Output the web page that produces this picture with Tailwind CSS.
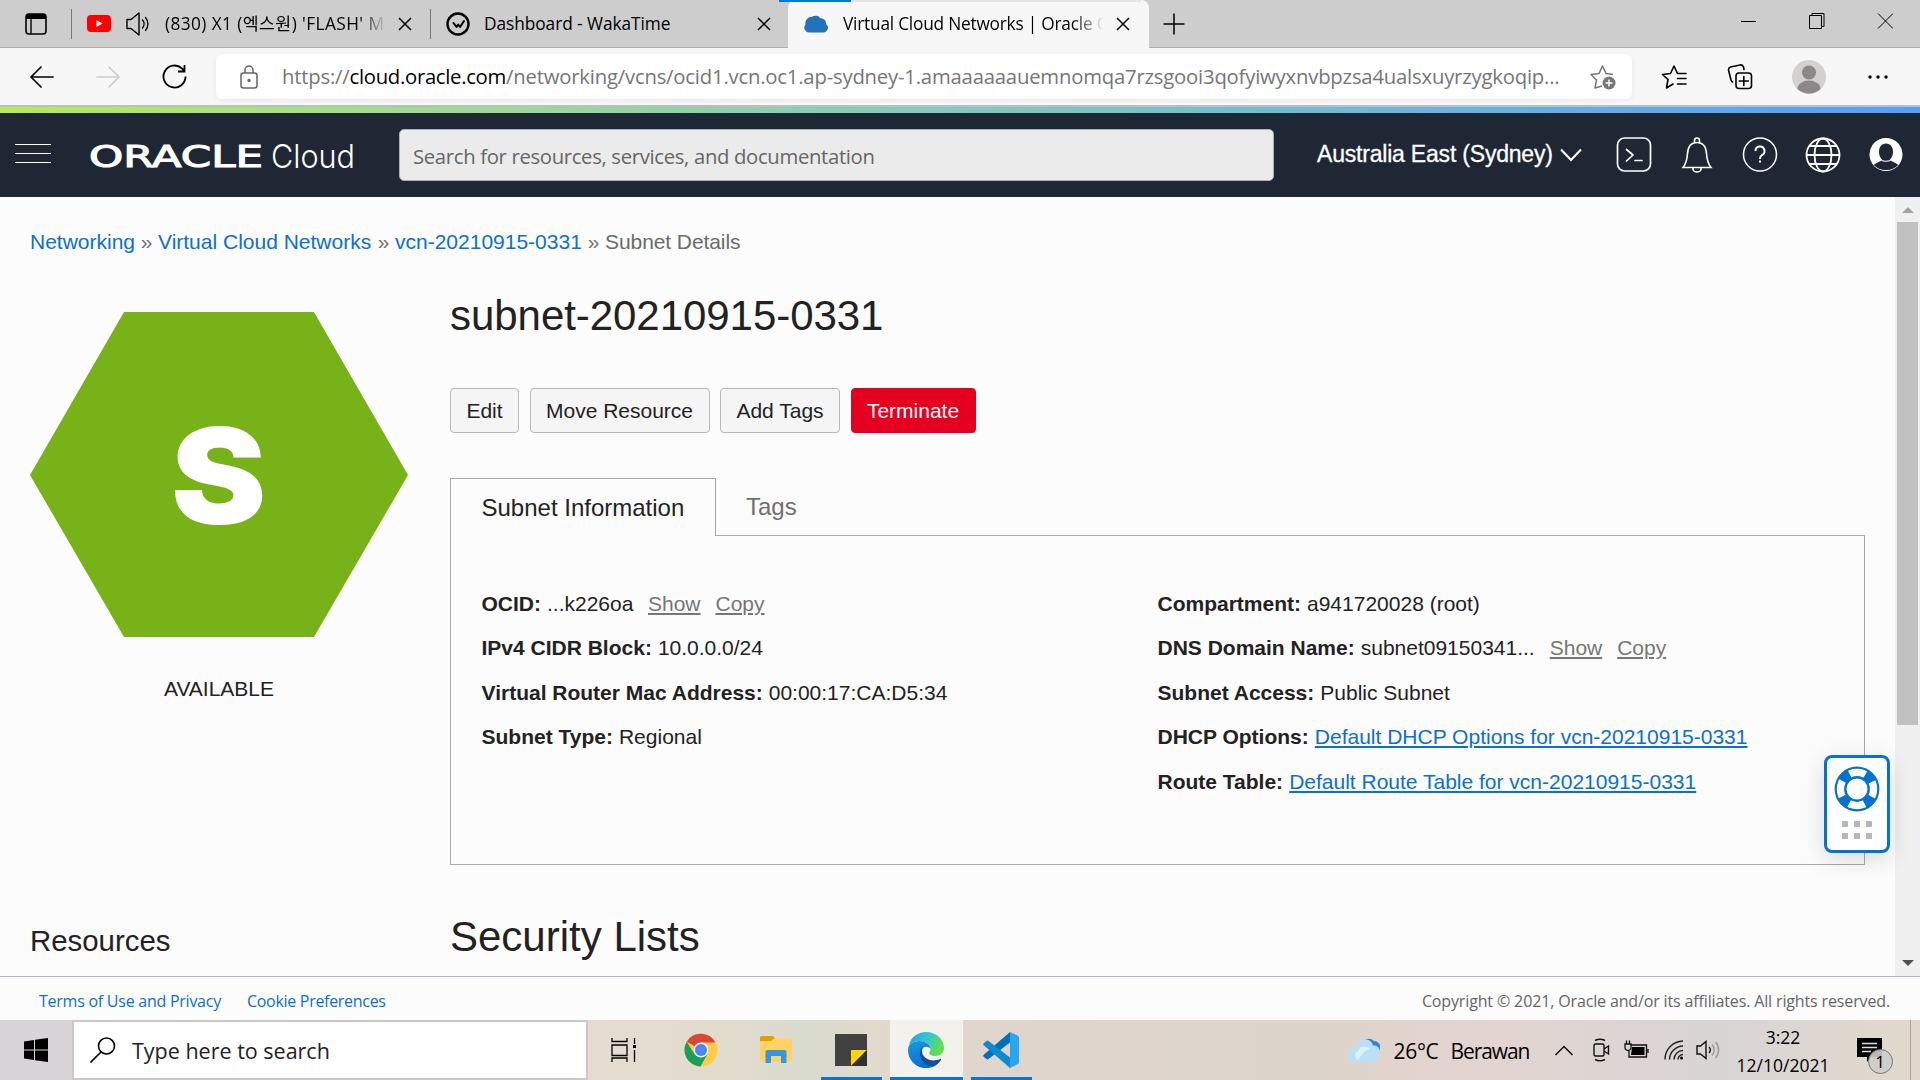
<!DOCTYPE html>
<html lang="en">
<head>
<meta charset="utf-8">
<title>Virtual Cloud Networks | Oracle Cloud</title>
<script src="https://cdn.jsdelivr.net/npm/@tailwindcss/browser@4"></script>
</head>
<body class="w-[1920px] h-[1080px] overflow-hidden flex flex-col bg-[#fcfcfc] text-[#222] whitespace-nowrap font-['Liberation_Sans',sans-serif]">

<!-- Tab strip -->
<div class="h-12 shrink-0 flex bg-[#cdcdcd] font-['Open_Sans','Noto_Sans_CJK_KR',sans-serif] text-[17.3px] text-black">
  <div class="w-[71px] border-b border-[#b0b0b0] flex items-center pl-[25px]">
    <svg width="22" height="22" viewBox="0 0 22 22"><rect x="1" y="1" width="20" height="20" rx="3" fill="none" stroke="#000" stroke-width="1.6"/><path d="M1 6V4a3 3 0 0 1 3-3h14a3 3 0 0 1 3 3v2z" fill="#000"/><path d="M6 6v15" stroke="#000" stroke-width="1.4"/></svg>
  </div>
  <div class="w-[359px] border-b border-[#b0b0b0] flex items-center">
    <i class="w-px h-[30px] bg-[#777]"></i>
    <svg class="ml-[15px]" width="24" height="17" viewBox="0 0 24 17"><rect width="24" height="17" rx="4" fill="#f00"/><path d="M9.500 5v7l6-3.500z" fill="#fff"/></svg>
    <svg class="ml-[14px]" width="26" height="26" viewBox="0 0 26 26" fill="none" stroke="#000" stroke-width="1.400" stroke-linecap="round" stroke-linejoin="round"><path d="M2 8.500h4L14 2v22l-8-6.500H2z"/><path d="M17.500 9a6 6 0 0 1 0 8M20.500 6.500a10 10 0 0 1 0 13"/></svg>
    <div class="ml-[14px] w-[221px] mask-r-from-88% mask-r-to-100% tracking-[0.4px]">(830) X1 (엑스원) 'FLASH' M</div>
    <svg class="ml-[12px]" width="14" height="14" viewBox="0 0 14 14"><path d="M1 1l12 12M13 1L1 13" stroke="#000" stroke-width="1.500"/></svg>
  </div>
  <div class="w-[358px] border-b border-[#b0b0b0] flex items-center">
    <i class="w-px h-[30px] bg-[#777]"></i>
    <svg class="ml-[15px]" width="24" height="24" viewBox="0 0 24 24" fill="none" stroke="#000"><circle cx="12" cy="12" r="10.500" stroke-width="2.400"/><path d="M7.500 11l3 4 1.700-2.500 1.800 2.500 4-6" stroke-width="2" stroke-linecap="round" stroke-linejoin="round"/></svg>
    <div class="ml-[14px] w-[273px] tracking-[-0.06px]">Dashboard - WakaTime</div>
    <svg width="14" height="14" viewBox="0 0 14 14"><path d="M1 1l12 12M13 1L1 13" stroke="#000" stroke-width="1.500"/></svg>
  </div>
  <div class="relative w-[361px] bg-[#f7f7f7] rounded-t-lg flex items-center">
    <i class="absolute top-0 -left-[9px] w-[72px] h-0.5 bg-[#0078d7]"></i>
    <i class="absolute top-0 left-[63px] w-[290px] h-0.5 bg-[#e5e5e5]"></i>
    <svg class="ml-[16px]" width="24" height="18" viewBox="0 0 24 18"><path d="M5 17.500a4.800 4.800 0 0 1-3.500-8A6.500 6.500 0 0 1 8 1.800a6 6 0 0 1 8.500 1.500A5 5 0 0 1 22 9a4.700 4.700 0 0 1-3 8.500z" fill="#2372bb"/></svg>
    <div class="ml-[15px] w-[261px] mask-r-from-88% mask-r-to-100% tracking-[-0.22px]">Virtual Cloud Networks | Oracle C</div>
    <svg class="ml-[12px]" width="14" height="14" viewBox="0 0 14 14"><path d="M1 1l12 12M13 1L1 13" stroke="#000" stroke-width="1.500"/></svg>
  </div>
  <div class="grow border-b border-[#b0b0b0] flex items-center">
    <svg class="ml-[14px]" width="22" height="22" viewBox="0 0 22 22"><path d="M11 .500v21M.500 11h21" stroke="#000" stroke-width="1.500"/></svg>
    <svg class="ml-[556px] mb-[5px]" width="152" height="16" viewBox="0 0 152 16" fill="none" stroke="#000"><path d="M0 8.500h15"/><path d="M68.500 2.500h12v13h-12zM71 2.500v-2h12v13h-2.500"/><path d="M137 .500l15 15M152 .500l-15 15"/></svg>
  </div>
</div>

<!-- Address bar row -->
<div class="h-[57px] shrink-0 bg-[#f7f7f7] flex items-center font-['Open_Sans',sans-serif]">
  <svg class="ml-[30px]" width="24" height="22" viewBox="0 0 24 22" fill="none" stroke="#000" stroke-width="1.700" stroke-linecap="round" stroke-linejoin="round"><path d="M23 11H1M11 1L1 11l10 10"/></svg>
  <svg class="ml-[42px]" width="24" height="22" viewBox="0 0 24 22" fill="none" stroke="#ccc" stroke-width="1.700" stroke-linecap="round" stroke-linejoin="round"><path d="M1 11h22M13 1l10 10-10 10"/></svg>
  <svg class="ml-[42px]" width="25" height="25" viewBox="0 0 25 25" fill="none" stroke="#000" stroke-width="1.800"><path d="M23.500 12.500A11 11 0 1 1 20 4.500l2 2M22.500 1v6.500h-6.500"/></svg>
  <div class="ml-[29px] w-[1416px] h-[45px] bg-white rounded-md shadow-[0_1px_5px_rgba(0,0,0,0.07)] flex items-center text-[20.300px] text-[#767676]">
    <svg class="ml-[24px]" width="18" height="24" viewBox="0 0 18 24" fill="none" stroke="#666" stroke-width="1.500"><rect x="1" y="8" width="16" height="15" rx="2.500"/><path d="M5 8V5a4 4 0 0 1 8 0v3"/><circle cx="9" cy="15.500" r="1" fill="#666"/></svg>
    <div class="ml-[24px] w-[1307px] pb-px tracking-[-0.200px]">https://<span class="text-black tracking-[-0.300px]">cloud.oracle.com</span>/networking/vcns/ocid1.vcn.oc1.ap-sydney-1.amaaaaaauemnomqa7rzsgooi3qofyiwyxnvbpzsa4ualsxuyrzygkoqip...</div>
    <svg width="28" height="26" viewBox="0 0 28 26" fill="none" stroke="#777" stroke-width="1.500" stroke-linejoin="round"><path d="M13 22l-7 2 1.500-8L2 10.500l8-1L13.500 2l3.500 7.500 7 1"/><circle cx="20" cy="19" r="6.500" fill="#777" stroke="none"/><path d="M20 15.500v7M16.500 19h7" stroke="#fff"/></svg>
  </div>
  <svg class="ml-[29px]" width="26" height="26" viewBox="0 0 26 26" fill="none" stroke="#000" stroke-width="1.600" stroke-linejoin="round" stroke-linecap="round"><path d="M12 20l-6.500 4L7 15.500 1.500 10.500l8-1L13 2l3.500 7.500h8.500M16.500 14.500H25M16.500 20H25"/></svg>
  <svg class="ml-[40px]" width="26" height="26" viewBox="0 0 26 26" fill="none" stroke="#000" stroke-width="1.600" stroke-linejoin="round" stroke-linecap="round"><rect x="9" y="9" width="15.500" height="15.500" rx="3"/><path d="M16.800 12.500v9M12.300 17h9M5.500 18A4 4 0 0 1 4 16L1.500 6A3 3 0 0 1 3.500 3L13 1a3 3 0 0 1 3.500 2l.500 2.500"/></svg>
  <svg class="ml-[39px]" width="34" height="34" viewBox="0 0 34 34"><circle cx="17" cy="17" r="17" fill="#d3d1ce"/><circle cx="17" cy="12.500" r="7" fill="#8b8885"/><path d="M5.500 29a11.500 8.500 0 0 1 23 0 17 17 0 0 1-23 0z" fill="#8b8885"/></svg>
  <svg class="ml-[42px]" width="20" height="4" viewBox="0 0 20 4"><circle cx="2" cy="2" r="1.700"/><circle cx="10" cy="2" r="1.700"/><circle cx="18" cy="2" r="1.700"/></svg>
</div>
<div class="h-0.5 shrink-0 bg-[#bdbdbd]"></div>
<div class="h-1.5 shrink-0 bg-linear-to-r from-[#b4ec51] to-[#529fff]"></div>

<!-- Console header -->
<header class="h-[84px] shrink-0 bg-[#1e2733] flex items-center text-white">
  <div class="ml-[15px] mb-[4px] w-9 flex flex-col gap-2"><i class="h-px bg-white"></i><i class="h-px bg-white"></i><i class="h-px bg-white"></i></div>
  <svg class="ml-[38px] overflow-visible" width="270" height="40" viewBox="0 0 270 40" fill="#fff">
    <text x="0" y="32" textLength="174" lengthAdjust="spacingAndGlyphs" class="font-['DejaVu_Sans',sans-serif] text-[30.500px]" stroke="#fff" stroke-width="1.100">ORACLE</text>
    <text x="182" y="32.500" textLength="84" lengthAdjust="spacingAndGlyphs" class="font-['Inter',sans-serif] font-light text-[33px]">Cloud</text>
  </svg>
  <div class="ml-[40px] w-[875px] h-[52px] bg-[#ebebeb] border border-[#a9b0b8] rounded-[5px] flex items-center pl-[13px] pt-0.5 text-[20.300px] text-[#666] tracking-[-0.330px] font-['Open_Sans',sans-serif]">Search for resources, services, and documentation</div>
  <div class="ml-[43px] w-[243px] pb-[1px] text-[23px] tracking-[-0.200px] [-webkit-text-stroke:0.3px_white]">Australia East (Sydney)</div>
  <svg width="22" height="14" viewBox="0 0 22 14" fill="none" stroke="#fff" stroke-width="2.200"><path d="M1 1.500l10 10.500L21 1.500"/></svg>
  <svg class="ml-[34px]" width="36" height="36" viewBox="0 0 36 36" fill="none" stroke="#fff" stroke-width="1.700" stroke-linecap="round" stroke-linejoin="round"><rect x="1.500" y="1" width="33" height="33" rx="7"/><path d="M10.500 12.500l6.500 5.500-6.500 6M19 23.500h7"/></svg>
  <svg class="ml-[29px]" width="32" height="36" viewBox="0 0 32 36" fill="none" stroke="#fff" stroke-width="1.600"><path d="M2 30.500c2.500-3 4-7 4.500-14C7 9 10 5.500 16 5.500S25 9 25.500 16.500c.500 7 2 11 4.500 14zM12 31v1a4 3 0 0 0 8 0v-1M13.500 5.500V3.500a2.500 2.500 0 0 1 5 0v2"/></svg>
  <svg class="ml-[29px]" width="36" height="36" viewBox="0 0 36 36" fill="none" stroke="#fff" stroke-width="1.500"><circle cx="18" cy="17.500" r="16.500"/><path d="M13.500 14a4.500 4.500 0 1 1 6.500 4c-1.600.900-2 1.800-2 4" stroke-width="2"/><path d="M17 23.500h2v2h-2z" fill="#fff" stroke="none"/></svg>
  <svg class="ml-[27px]" width="36" height="36" viewBox="0 0 36 36" fill="none" stroke="#fff" stroke-width="1.800"><circle cx="18" cy="18" r="16.500"/><ellipse cx="18" cy="18" rx="8.500" ry="16.500"/><path d="M1.500 18h33M4.500 9h27M4.500 27h27"/></svg>
  <svg class="ml-[27px]" width="36" height="36" viewBox="0 0 36 36"><circle cx="18" cy="17.500" r="16.500" fill="#fff"/><path d="M18 6.500c4.500 0 7 3.500 7 8.500 0 3.200-1.200 5.800-3 7.500l.400 1c3.500 2 6 2.800 7.800 4.500A16 16 0 0 1 18 33 16 16 0 0 1 5.800 28c1.800-1.700 4.300-2.500 7.800-4.500l.400-1c-1.800-1.700-3-4.300-3-7.500 0-5 2.500-8.500 7-8.500z" fill="#1e2733"/><path d="M13.500 23.500q4.500 1.500 9 0" stroke="#fff" stroke-width="1.200" fill="none"/></svg>
</header>

<!-- Page body -->
<div class="relative h-[779px] shrink-0 flex overflow-hidden">
  <main class="w-[1895px] pl-[30px] pt-[30px]">
    <nav class="flex h-[30px] leading-[30px] text-[21px] text-[#0a70d0]">
      <span class="w-[105px]">Networking</span><span class="w-[23px] text-center text-[#6f6f6f]">»</span>
      <span class="w-[214px]">Virtual Cloud Networks</span><span class="w-[23px] text-center text-[#6f6f6f]">»</span>
      <span class="w-[187px]">vcn-20210915-0331</span><span class="w-[23px] text-center text-[#6f6f6f]">»</span>
      <span class="text-[#6b6b6b] tracking-[-0.080px]">Subnet Details</span>
    </nav>
    <div class="mt-[34px] flex text-[21px]">
      <aside class="w-[420px] pt-[21px]">
        <svg width="378" height="325" viewBox="0 0 378 325"><path d="M0 163L94 0h190l94 163-94 162H94z" fill="#77b318"/><text transform="translate(188.500 211.500) scale(1.100 1.020)" text-anchor="middle" fill="#fff" class="font-['Inter',sans-serif] font-black text-[130px]">S</text></svg>
        <div class="mt-[37px] w-[378px] leading-[30px] text-center">AVAILABLE</div>
        <h2 class="mt-[217px] leading-10 text-[29.400px]">Resources</h2>
      </aside>
      <section class="w-[1415px]">
        <h1 class="leading-[50px] text-[42px] tracking-[-0.050px]">subnet-20210915-0331</h1>
        <div class="mt-[47px] h-[45px] flex gap-[10.500px] *:rounded *:border *:border-[#b4b9c1] *:bg-[#f5f5f5] *:flex *:items-center *:justify-center">
          <button class="w-[69px]">Edit</button>
          <button class="w-[180px]">Move Resource</button>
          <button class="w-[120px]">Add Tags</button>
          <button class="w-[125px] border-[#e6001f]! bg-[#e6001f]! text-white">Terminate</button>
        </div>
        <div class="mt-[45px] h-[58px] flex text-[24px]">
          <div class="relative z-10 w-[266px] border border-b-0 border-[#a9a9a9] bg-[#fcfcfc] pl-[30.500px] leading-[58px]">Subnet Information</div>
          <div class="pl-[30px] leading-[58px] text-[#6f6f6f]">Tags</div>
        </div>
        <div class="-mt-px h-[330px] border border-[#a9a9a9] pl-[30.500px] pt-[46px] grid grid-cols-[676px_1fr] leading-[44.400px]">
          <dl>
            <div class="flex"><dt class="font-bold mr-[6px]">OCID:</dt><dd class="w-[101px]">...k226oa</dd><a class="text-[#767676] underline w-[67.500px]">Show</a><a class="text-[#767676] underline">Copy</a></div>
            <div class="flex"><dt class="font-bold mr-[6px]">IPv4 CIDR Block:</dt><dd>10.0.0.0/24</dd></div>
            <div class="flex"><dt class="font-bold mr-[6px]">Virtual Router Mac Address:</dt><dd>00:00:17:CA:D5:34</dd></div>
            <div class="flex"><dt class="font-bold mr-[6px]">Subnet Type:</dt><dd>Regional</dd></div>
          </dl>
          <dl>
            <div class="flex"><dt class="font-bold mr-[6px]">Compartment:</dt><dd>a941720028 (root)</dd></div>
            <div class="flex"><dt class="font-bold mr-[6px]">DNS Domain Name:</dt><dd class="w-[189px]">subnet09150341...</dd><a class="text-[#767676] underline w-[67.500px]">Show</a><a class="text-[#767676] underline">Copy</a></div>
            <div class="flex"><dt class="font-bold mr-[6px]">Subnet Access:</dt><dd>Public Subnet</dd></div>
            <div class="flex"><dt class="font-bold mr-[6px]">DHCP Options:</dt><a class="text-[#0a70d0] underline">Default DHCP Options for vcn-20210915-0331</a></div>
            <div class="flex"><dt class="font-bold mr-[6px]">Route Table:</dt><a class="text-[#0a70d0] underline">Default Route Table for vcn-20210915-0331</a></div>
          </dl>
        </div>
        <h1 class="mt-[47px] leading-[50px] text-[42px]">Security Lists</h1>
      </section>
    </div>
  </main>
  <!-- Scrollbar -->
  <div class="w-[25px] bg-[#f0f0f0] flex flex-col items-center">
    <svg class="mt-[10px]" width="12" height="6" viewBox="0 0 12 6"><path d="M0 6l6-6 6 6z" fill="#a3a3a3"/></svg>
    <div class="mt-[9px] w-[21px] h-[503px] bg-[#c1c1c1]"></div>
    <svg class="mt-auto mb-[10px]" width="12" height="6" viewBox="0 0 12 6"><path d="M0 0l6 6 6-6z" fill="#505050"/></svg>
  </div>
  <!-- Floating help launcher -->
  <div class="absolute left-[1824px] top-[558px] w-[66px] h-[98px] bg-white border-3 border-[#0572ce] rounded-lg shadow-[0_6px_24px_rgba(0,0,0,0.14)] flex flex-col items-center pt-2">
    <svg width="46" height="46" viewBox="0 0 46 46" fill="none" stroke="#0572ce"><circle cx="23" cy="23" r="16.500" stroke-width="11" stroke-dasharray="9.900 16.020" stroke-dashoffset="-8.010"/><circle cx="23" cy="23" r="21.300" stroke-width="2.200"/><circle cx="23" cy="23" r="11.700" stroke-width="2.400"/></svg>
    <div class="mt-[9px] grid grid-cols-3 gap-x-[6px] gap-y-[6px] *:size-[6px] *:bg-[#b3b9c3]"><i></i><i></i><i></i><i></i><i></i><i></i></div>
  </div>
</div>

<!-- Legal footer -->
<footer class="h-11 shrink-0 border-t border-[#b3bbc6] flex items-center pl-[39px] pr-[30px] pt-[5px] font-['Open_Sans',sans-serif] text-[16px] text-[#0a70d0]">
  <div class="w-[208px] tracking-[-0.250px]">Terms of Use and Privacy</div>
  <div class="tracking-[-0.300px]">Cookie Preferences</div>
  <div class="ml-auto text-[#666] tracking-[-0.140px]">Copyright © 2021, Oracle and/or its affiliates. All rights reserved.</div>
</footer>

<!-- Taskbar -->
<div class="h-[60px] shrink-0 flex items-center text-black font-['Open_Sans',sans-serif] bg-[linear-gradient(90deg,#d7d5d7_0px,#d7d5d7_60px,#e5dccf_588px,#e2dccd_740px,#d8dbcf_810px,#e2dacd_870px,#dfd5cd_1000px,#ddd4cb_1320px,#e3d4cf_1460px,#d9d5d5_1720px,#e2d9cb_1920px)]">
  <div class="w-[72px] flex justify-center"><svg width="24" height="24" viewBox="0 0 24 24"><path d="M0 3.400L10 2v9.500H0zM11 1.800L24 0v11.500H11zM0 12.500h10V22L0 20.600zM11 12.500h13V24l-13-1.800z"/></svg></div>
  <div class="w-[516px] h-full bg-white border-2 border-[#c9c9c9] flex items-center pl-4">
    <svg width="26" height="26" viewBox="0 0 26 26" fill="none" stroke="#000" stroke-width="1.600"><circle cx="16.500" cy="9" r="8"/><path d="M11 15L.500 25.500"/></svg>
    <span class="ml-[16px] pt-[3px] text-[21.500px] text-[#222]">Type here to search</span>
  </div>
  <svg class="ml-[23px]" width="26" height="24" viewBox="0 0 26 24" fill="none" stroke="#000" stroke-width="1.300"><path d="M1 0v3.500h15V0M1 7h15v10.500H1zM1 24v-4h15v4M23.500 0v6M23.500 12v12"/><path d="M22 7h3v3h-3z" fill="#000" stroke="none"/></svg>
  <svg class="ml-[46.500px]" width="34" height="34" viewBox="0 0 34 34"><circle cx="17" cy="17" r="16.500" fill="#fc4"/><path d="M17 17L2.700 8.700A16.500 16.500 0 0 1 31.300 9.500L17 9.500z" fill="#d9453a"/><path d="M2.700 8.700A16.500 16.500 0 0 0 16.500 33.500L23.500 21 10.500 21z" fill="#1a9f58"/><circle cx="17" cy="17" r="7.500" fill="#f2f2f2"/><circle cx="17" cy="17" r="6" fill="#4a86f5"/></svg>
  <svg class="ml-[42px]" width="32" height="28" viewBox="0 0 32 28"><path d="M0 6V1.500A1.500 1.500 0 0 1 1.500 0H13l2.500 3H14L11 6z" fill="#e2a100"/><path d="M0 5h11l3-2.500h16.500A1.500 1.500 0 0 1 32 4v20a1.500 1.500 0 0 1-1.500 1.500h-29A1.500 1.500 0 0 1 0 24z" fill="#ffd262"/><path d="M5.500 27V16a2 2 0 0 1 2-2h17a2 2 0 0 1 2 2v11h-5.500v-7h-10v7z" fill="#3895df"/></svg>
  <div class="ml-[29px] w-[61px] h-full flex flex-col items-center border-b-3 border-[#0078d7]"><svg class="mt-[14px]" width="32" height="32" viewBox="0 0 32 32"><path d="M0 0h32v32H0z" fill="#414141"/><path d="M16 16h16L16 32z" fill="#ffd600"/><path d="M32 16v16H16z" fill="#303030"/></svg></div>
  <div class="ml-2 w-[73px] h-full flex flex-col items-center border-b-3 border-[#0078d7] bg-[#f2f1ec]">
    <svg class="mt-3" width="36" height="36" viewBox="0 0 36 36"><defs><linearGradient id="ea" x1="0" y1="0" x2="1" y2=".4"><stop offset="0" stop-color="#1b9fdc"/><stop offset=".5" stop-color="#33c3d6"/><stop offset="1" stop-color="#60e050"/></linearGradient><linearGradient id="eb" x1="0" y1="0" x2=".3" y2="1"><stop offset="0" stop-color="#1a9be0"/><stop offset="1" stop-color="#0a6fd0"/></linearGradient></defs><path d="M1 13C3 5 10 0 18 0c11 0 18 8 18 16 0 5-4 8-8.500 8-4 0-6.500-1.500-6.500-3 0-.800 1.500-1.500 1.500-4C22.500 13 18 9 11 9 6 9 3 11 1 13z" fill="url(#ea)"/><path d="M0 18C0 12 5 9 11 9c7 0 11.500 4 11.500 8-4-5-11-1-10 6 .800 6 5 11 12 12A18 18 0 0 1 0 18z" fill="url(#eb)"/><path d="M16 14c-3.500 2-5 6-3.500 11 1.500 5.500 6 9.500 12 10a18 18 0 0 0 8.500-7c.500-1-.300-1.500-1-1-9 4-18-1-18-8 0-2 1-4 2-5z" fill="#124f9c"/></svg>
  </div>
  <div class="ml-2 w-[61px] h-full flex flex-col border-b-3 border-[#0078d7] pl-3"><svg class="mt-3" width="36" height="36" viewBox="0 0 36 36"><path d="M27 0L1 22.500a1.600 1.600 0 0 0 0 2.500l2.500 2a1.600 1.600 0 0 0 2 0L27 10.500z" fill="#0070b8"/><path d="M27 36L1 13.500A1.600 1.600 0 0 1 1 11l2.500-2a1.600 1.600 0 0 1 2 0L27 25.500z" fill="#0c8ad2"/><path d="M27 0l7.500 3.500A2.500 2.500 0 0 1 36 6v24a2.500 2.500 0 0 1-1.500 2.300L27 36z" fill="#27a7f0"/></svg></div>
  <svg class="ml-[316px]" width="32" height="24" viewBox="0 0 32 24"><path d="M14 6a7 7 0 0 1 12-3 6 6 0 0 1 6 7c0 5-3 7-6 7z" fill="#2f86cf"/><path d="M6 24a6 6 0 0 1-1-12A6.500 6.500 0 0 1 10 6a8 8 0 0 1 15 1.500 6 6 0 0 1 6.500 8A8 8 0 0 1 24 24z" fill="#b9e0f8"/><path d="M10 22a5 5 0 0 1 0-9 7 7 0 0 1 12-2c-5 1-8 5-12 11z" fill="#dff1fc"/></svg>
  <div class="ml-[14px] w-[57px] pt-1 text-[21px] tracking-[-0.300px]">26°C</div>
  <div class="w-[104px] pt-1 text-[21px] tracking-[-1.100px]">Berawan</div>
  <svg width="18" height="11" viewBox="0 0 18 11" fill="none" stroke="#111" stroke-width="1.500"><path d="M.500 10L9 1.500l8.500 8.500"/></svg>
  <svg class="ml-[20px]" width="17" height="24" viewBox="0 0 17 24" fill="none" stroke="#111" stroke-width="1.400"><rect x="1" y="6" width="10" height="12" rx="1.500"/><path d="M11 11l4.500-3v8L11 13M2 2.500q5-2.500 10 0M2 21.500q5 2.500 10 0"/></svg>
  <svg class="ml-[14px]" width="25" height="20" viewBox="0 0 25 20" fill="none" stroke="#111" stroke-width="1.300"><path d="M7 5h15.500v12H5v-6M24 9v4M1 4h6v3.500a3 3 0 0 1-6 0zM2.500 4V.500M5.500 4V.500"/><path d="M8 7h12.500v8H7z" fill="#000" stroke="none"/></svg>
  <svg class="ml-[15px]" width="20" height="20" viewBox="0 0 20 20" fill="none" stroke="#222" stroke-width="1.400"><path d="M1 19.500A18.500 18.500 0 0 1 19 1M5.500 19.500A14 14 0 0 1 19 6M10 19.500a9 9 0 0 1 9-9"/><path d="M14 19.500a5 5 0 0 1 5-5"/><circle cx="17.500" cy="18" r="1.500" fill="#000" stroke="none"/></svg>
  <svg class="ml-[12px]" width="24" height="20" viewBox="0 0 24 20" fill="none" stroke="#111" stroke-width="1.400"><path d="M1 6h3.500L10 1.500v17L4.500 14H1z"/><path d="M13 7a4 4 0 0 1 0 6"/><path d="M16 4.500a8 8 0 0 1 0 11M19.500 2a12 12 0 0 1 0 16" stroke="#999"/></svg>
  <div class="ml-[17px] w-[93px] pt-px text-center text-[17.500px] leading-[28px]">3:22<br>12/10/2021</div>
  <div class="relative ml-[27px] w-[54px] h-full pt-[18px] border-r border-[#a9a39b]">
    <svg width="25" height="26" viewBox="0 0 25 26"><path d="M0 0h25v19H14l-4 5v-5H0z"/><path d="M5 5.500h15M5 9.500h15M5 13.500h9" stroke="#ddd" stroke-width="1.300"/></svg>
    <div class="absolute left-[11px] top-[29px] size-[25px] rounded-full bg-[#cfccca]/90 border border-[#777] text-[17px] leading-[23px] text-center">1</div>
  </div>
</div>
</body>
</html>
